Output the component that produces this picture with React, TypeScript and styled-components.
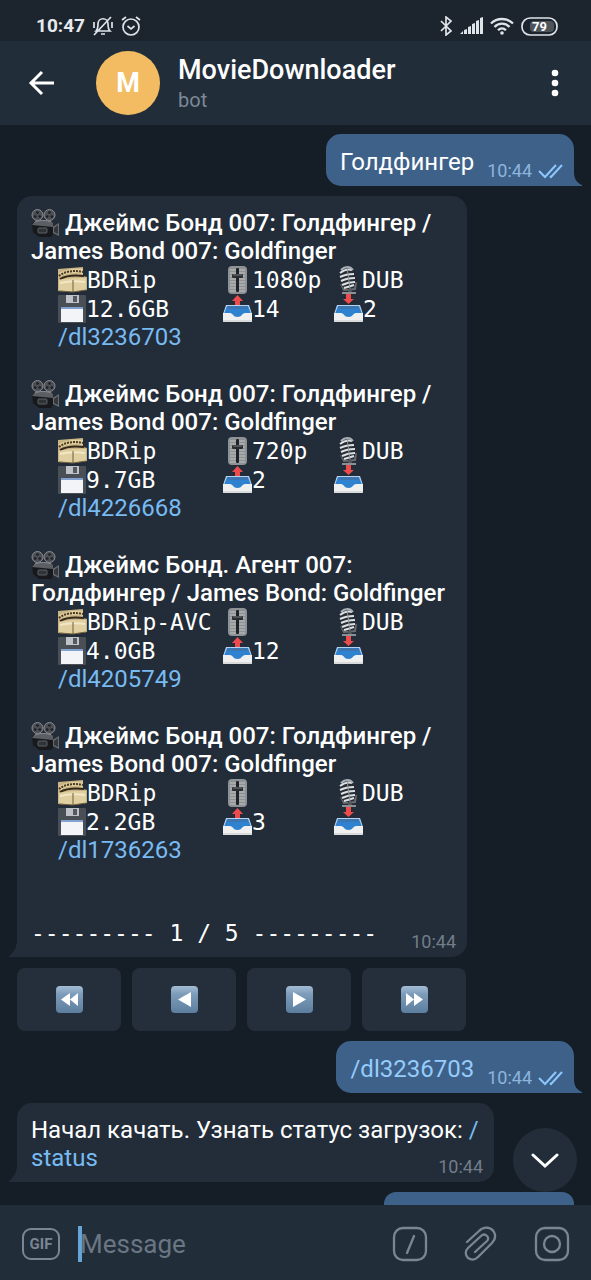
import React from "react";
import styled, { createGlobalStyle } from "styled-components";

const c = {
  page: "#151e27",
  status: "#1c242d",
  bar: "#222d3a",
  incoming: "#222d39",
  outgoing: "#3e618a",
  link: "#78bbf2",
  outLink: "#96ccfa",
  muted: "#727d8a",
  icon: "#7a8693",
};

const Global = createGlobalStyle`
  * { box-sizing: border-box; }
  body { margin: 0; background: ${c.page}; font-family: Roboto, "Open Sans", sans-serif; color: #fff; }
  button { border: 0; padding: 0; margin: 0; background: none; color: inherit; font: inherit; cursor: pointer; }
  svg { display: block; flex: none; }
  a { text-decoration: none; }
`;

const Screen = styled.div`
  display: flex;
  flex-direction: column;
  height: 100vh;
  overflow: hidden;
`;

const StatusBar = styled.div`
  display: flex;
  align-items: center;
  justify-content: space-between;
  flex: none;
  height: 41px;
  padding: 11px 33px 0 36px;
  background: ${c.status};
  color: #e6eaee;
`;

const StatusGroup = styled.div<{ $gap: number }>`
  display: flex;
  align-items: center;
  gap: ${(p) => p.$gap}px;
`;

const Clock = styled.span`
  font-size: 19px;
  line-height: 22px;
  font-weight: 700;
`;

const Header = styled.header`
  display: flex;
  align-items: center;
  flex: none;
  height: 84px;
  padding: 0 25px 0 26px;
  background: ${c.bar};
`;

const IconButton = styled.button`
  display: flex;
  align-items: center;
  justify-content: center;
  flex: none;
`;

const Avatar = styled.div`
  display: flex;
  align-items: center;
  justify-content: center;
  flex: none;
  width: 64px;
  height: 64px;
  margin: 0 18px 0 38px;
  border-radius: 50%;
  background: #f3bc62;
  font-size: 27px;
  font-weight: 700;
`;

const Peer = styled.div`
  flex: 1;
  min-width: 0;
  padding-top: 2px;
`;

const PeerName = styled.h1`
  margin: 0;
  font-size: 27px;
  line-height: 32px;
  font-weight: 500;
`;

const PeerKind = styled.p`
  margin: 0;
  font-size: 20px;
  line-height: 28px;
  color: #7c8896;
`;

const Chat = styled.main`
  position: relative;
  display: flex;
  flex-direction: column;
  flex: 1;
  min-height: 0;
  gap: 10px;
  padding: 9px 17px 0;
  overflow: hidden;
`;

const Bubble = styled.article<{ $out?: boolean; $width?: number }>`
  position: relative;
  display: flex;
  align-items: flex-end;
  gap: 13px;
  flex: none;
  align-self: ${(p) => (p.$out ? "flex-end" : "flex-start")};
  width: ${(p) => (p.$width ? `${p.$width}px` : "auto")};
  max-width: 100%;
  padding: ${(p) => (p.$out ? "14px 11px 10px 14px" : "13px 14px 10px")};
  border-radius: ${(p) => (p.$out ? "15px 15px 0 15px" : "15px 15px 15px 0")};
  background: ${(p) => (p.$out ? c.outgoing : c.incoming)};
  font-size: 24px;
  line-height: 28px;
`;

const BubbleBody = styled.div`
  flex: 1;
  min-width: 0;
`;

const TailShape = styled.svg<{ $out?: boolean }>`
  position: absolute;
  bottom: 0;
  ${(p) => (p.$out ? "left: 100%;" : "right: 100%;")}
`;

const Link = styled.a<{ $out?: boolean }>`
  color: ${(p) => (p.$out ? c.outLink : c.link)};
`;

const Stamp = styled.span<{ $out?: boolean }>`
  display: flex;
  align-items: center;
  gap: 6px;
  margin-bottom: ${(p) => (p.$out ? "-5px" : "0")};
  font-size: 18px;
  line-height: 20px;
  color: ${(p) => (p.$out ? "#8db5dc" : c.muted)};
`;

const CornerStamp = styled(Stamp)`
  position: absolute;
  right: 11px;
  bottom: 5px;
`;

const Movie = styled.section`
  margin-bottom: 29px;
`;

const MovieTitle = styled.h2`
  margin: 0;
  font-size: 24px;
  line-height: 28px;
  font-weight: 500;
  svg { display: inline-block; vertical-align: middle; margin: -6px 0 -2px; }
`;

const Facts = styled.div`
  display: grid;
  grid-template-columns: 165px 111px 1fr;
  grid-auto-rows: 29px;
  padding-left: 27px;
`;

const Fact = styled.span`
  display: flex;
  align-items: center;
  font-family: "Droid Sans Mono", "DejaVu Sans Mono", monospace;
  font-size: 23px;
  white-space: pre;
`;

const MovieLink = styled(Link)`
  display: block;
  padding-left: 27px;
`;

const Pager = styled.p`
  margin: 55px 0 0;
  font-family: "Droid Sans Mono", "DejaVu Sans Mono", monospace;
  font-size: 23px;
  line-height: 28px;
`;

const Keyboard = styled.div`
  display: grid;
  grid-template-columns: repeat(4, 1fr);
  gap: 11px;
  flex: none;
  width: 449px;
  max-width: 100%;
  height: 63px;
  margin-top: 1px;
`;

const Key = styled(IconButton)`
  border-radius: 8px;
  background: #242f3b;
`;

const ScrollDown = styled(IconButton)`
  position: absolute;
  right: 14px;
  bottom: 13px;
  width: 64px;
  height: 64px;
  border-radius: 50%;
  background: #232d3a;
`;

const Composer = styled.form`
  display: flex;
  align-items: center;
  flex: none;
  height: 75px;
  padding: 3px 21px 0 22px;
  background: ${c.bar};
  color: ${c.icon};
`;

const GifButton = styled(IconButton)`
  width: 38px;
  height: 32px;
  border: 2px solid ${c.icon};
  border-radius: 9px;
  font-size: 15px;
  font-weight: 700;
`;

const Field = styled.div`
  display: flex;
  align-items: center;
  flex: 1;
  min-width: 0;
  margin: 0 16px 0 18px;
`;

const Caret = styled.span`
  flex: none;
  width: 4px;
  height: 36px;
  margin-right: -2px;
  background: #64a5dc;
`;

const MessageInput = styled.input`
  flex: 1;
  min-width: 0;
  padding: 0;
  border: 0;
  outline: 0;
  background: transparent;
  color: #fff;
  font: 26px/36px Roboto, "Open Sans", sans-serif;
  &::placeholder { color: #6a7683; opacity: 1; }
`;

const Tools = styled.div`
  display: flex;
  align-items: center;
  gap: 35px;
`;

const Tail = ({ out }: { out?: boolean }) => (
  <TailShape $out={out} width="8" height="18" viewBox="0 0 8 18" aria-hidden>
    {out ? (
      <path d="M0 4C0 11 3 15 8 17V18H0Z" fill={c.outgoing} />
    ) : (
      <path d="M8 0C8 8 5 13 0 17V18H8Z" fill={c.incoming} />
    )}
  </TailShape>
);

const Checks = () => (
  <svg width="25" height="16" viewBox="0 0 25 16" fill="none" stroke="#8cc8fb" strokeWidth="2" aria-hidden>
    <path d="M1 8l6 6L18 2M12 13l1 1L24 2" />
  </svg>
);

const CameraIcon = () => (
  <svg width="28" height="28" viewBox="0 0 28 28" aria-hidden>
    <path d="M20 19l8-5v13l-8-4z" fill="#6a6c6f" />
    <path d="M23 19l4-3v9l-4-2z" fill="#34373b" />
    <path d="M1 15l4-4h14l3 3v11l-2 3H8l-6-5z" fill="#17191c" />
    <path d="M1 16l4-5h14l3 3v4c-7-1-14-1-21-2z" fill="#5b5f64" />
    <path d="M4 13c5-2 11-2 16 0" fill="none" stroke="#85898d" />
    <rect x="7" y="19" width="9" height="5" rx="1" fill="#303336" stroke="#5c6064" />
    <g fill="#4c4f53" stroke="#888b8f">
      <circle cx="6.500" cy="6" r="5.500" />
      <circle cx="18.500" cy="6" r="5.500" />
    </g>
    <g fill="#1c1f23">
      <circle cx="6.500" cy="3.500" r="1.300" /><circle cx="4.200" cy="7.500" r="1.300" /><circle cx="8.800" cy="7.500" r="1.300" />
      <circle cx="18.500" cy="3.500" r="1.300" /><circle cx="16.200" cy="7.500" r="1.300" /><circle cx="20.800" cy="7.500" r="1.300" />
    </g>
  </svg>
);

const FilmIcon = () => (
  <svg width="29" height="28" viewBox="0 0 29 28" aria-hidden>
    <path d="M0 3L25 1v9l4 1v13l-14 2L0 25z" fill="#c9b486" />
    <path d="M1 7c7-4 16-5 24-4v5C16 6 9 7 2 11z" fill="#e2cf9f" />
    <path d="M1 10C7 5 17 4 25 6" fill="none" stroke="#4b3b22" strokeWidth="2" strokeDasharray="2 1" />
    <path d="M2 13c7-4 16-4 24-3" fill="none" stroke="#33281a" strokeWidth="2" />
    <path d="M1 14c8-2 18-2 27-2v12l-13 2-14-2z" fill="#e0cfa1" />
    <path d="M2 17c8-2 17-2 25-1" fill="none" stroke="#f2e7c6" strokeWidth="2" />
    <path d="M15 14v12M1 25l14 1 13-2" fill="none" stroke="#715f3d" />
  </svg>
);

const FloppyIcon = () => (
  <svg width="28" height="28" viewBox="0 0 28 28" aria-hidden>
    <rect width="28" height="28" rx="1" fill="#4a4e55" />
    <rect x="8" width="13" height="8" fill="#bfc2c6" />
    <rect x="15" y="1" width="4" height="6" fill="#555a62" />
    <rect x="3" y="12" width="22" height="15" fill="#f2f4f7" />
    <rect x="3" y="12" width="22" height="2" fill="#82a3d1" />
  </svg>
);

const SliderIcon = () => (
  <svg width="29" height="28" viewBox="0 0 29 28" aria-hidden>
    <rect x="5" y="0" width="19" height="28" rx="4" fill="#8f9294" />
    <path d="M7 4h15M7 7h15M7 10h15M7 13h15M7 16h15M7 19h15M7 22h15M7 25h15" stroke="#bfc1c2" />
    <rect x="13" y="2" width="3" height="24" rx="1" fill="#1f2327" />
    <rect x="9" y="8" width="11" height="4" rx="1" fill="#292d31" />
    <path d="M10 9h9" stroke="#777b7f" />
  </svg>
);

const MicIcon = () => (
  <svg width="28" height="28" viewBox="0 0 28 28" aria-hidden>
    <path d="M7 18l3 6 11-1 1-7" fill="none" stroke="#696d71" strokeWidth="2" />
    <path d="M14 22h3l1 4h-4z" fill="#54585c" />
    <path d="M8 27h14" stroke="#8b9094" strokeWidth="2" />
    <rect x="6" y="1" width="15" height="22" rx="7" transform="rotate(-8 14 12)" fill="#272c31" />
    <path d="M6 7c4-3 9-4 12-3M6 11c4-2 9-3 14-3M7 15c4-2 9-3 14-3M8 19c4-2 8-3 13-3M10 22c4-1 7-2 10-3" fill="none" stroke="#dce0e5" strokeWidth="2" />
    <path d="M7 4c4-4 9-4 12 0" fill="none" stroke="#a9b0b6" strokeWidth="2" />
    <path d="M13 1l3 22" fill="none" stroke="#92999f" />
  </svg>
);

const TrayIcon = ({ up }: { up?: boolean }) => (
  <svg width="29" height="29" viewBox="0 0 29 29" aria-hidden>
    <path d="M3 11h23l3 9H0z" fill="#b5d3f0" />
    <path d="M4 12h21l3 8-6 2-3 3h-9l-3-3-6-2z" fill="#2f82d0" />
    <path d="M5 12h19l1 3H4z" fill="#3b76b0" />
    <path d="M0 19h7c3 0 3 4 7.500 4S19 19 22 19h7v8q0 1-1 1H1q-1 0-1-1z" fill="#f0f0f0" />
    <path d="M0 26h29v1q0 1-1 1H1q-1 0-1-1z" fill="#d9dadb" />
    <path d={up ? "M14.500 1L20 7h-3v4h-5V7H9z" : "M14.500 10L9 5h3V0h5v5h3z"} fill="#ee4c4c" />
  </svg>
);

const keyShapes: Record<string, string> = {
  First: "M14 7v13l-9-6.500zM22 7v13l-8-6.500z",
  Previous: "M20 6v15L7 13.500z",
  Next: "M7 6v15l13-7.500z",
  Last: "M5 7v13l8-6.500zM13 7v13l9-6.500z",
};

const KeyGlyph = ({ name }: { name: string }) => (
  <svg width="27" height="27" viewBox="0 0 27 27" aria-hidden>
    <defs>
      <linearGradient id={`key-${name}`} x2="0" y2="1">
        <stop stopColor="#a4bdd5" />
        <stop offset="0.300" stopColor="#7d9cba" />
        <stop offset="1" stopColor="#5c7e9e" />
      </linearGradient>
    </defs>
    <rect width="27" height="27" rx="4" fill={`url(#key-${name})`} />
    <path d={keyShapes[name]} fill="#fff" />
  </svg>
);

type MovieData = { title: string; rip: string; res: string; size: string; up: string; down: string; link: string };

const movies: MovieData[] = [
  { title: "Джеймс Бонд 007: Голдфингер / James Bond 007: Goldfinger", rip: "BDRip", res: "1080p", size: "12.6GB", up: "14", down: "2", link: "/dl3236703" },
  { title: "Джеймс Бонд 007: Голдфингер / James Bond 007: Goldfinger", rip: "BDRip", res: "720p", size: "9.7GB", up: "2", down: "", link: "/dl4226668" },
  { title: "Джеймс Бонд. Агент 007: Голдфингер / James Bond: Goldfinger", rip: "BDRip-AVC", res: "", size: "4.0GB", up: "12", down: "", link: "/dl4205749" },
  { title: "Джеймс Бонд 007: Голдфингер / James Bond 007: Goldfinger", rip: "BDRip", res: "", size: "2.2GB", up: "3", down: "", link: "/dl1736263" },
];

export default function App() {
  return (
    <Screen>
      <Global />
      <StatusBar>
        <StatusGroup $gap={8}>
          <Clock>10:47</Clock>
          <svg width="20" height="20" viewBox="0 0 20 20" fill="none" stroke="#dfe4e9" strokeWidth="1.700" aria-hidden>
            <path d="M3 15c2-2 2-4 2-7 0-7 10-7 10 0 0 3 0 5 2 7zM8 18h4M18 1L1 19M1 6v6M19 6v6" />
          </svg>
          <svg width="20" height="20" viewBox="0 0 20 20" fill="none" stroke="#dfe4e9" strokeWidth="1.700" aria-hidden>
            <circle cx="10" cy="11" r="8" />
            <path d="M1 4l4-3M19 4l-4-3M6.500 10l3.500 3 3.500-3" />
          </svg>
        </StatusGroup>
        <StatusGroup $gap={7}>
          <svg width="13" height="20" viewBox="0 0 13 20" fill="none" stroke="#dfe4e9" strokeWidth="1.700" aria-hidden>
            <path d="M1 5l10 10-5 4V1l5 4L1 15" />
          </svg>
          <svg width="23" height="18" viewBox="0 0 23 18" fill="#dfe4e9" aria-hidden>
            <path d="M0 17l3-3v3zM4 13l3-1v5H4zM8 10l3-1v8H8zM12 7l3-1v11h-3zM16 4l3-1v14h-3zM20 1l3-1v17h-3z" />
          </svg>
          <svg width="24" height="18" viewBox="0 0 24 18" fill="none" stroke="#dfe4e9" strokeWidth="2.300" aria-hidden>
            <path d="M1 6.500c6-6 16-6 22 0M4.500 10c4-4.500 11-4.500 15 0M8 13.300c2.500-2.600 5.500-2.600 8 0" />
            <circle cx="12" cy="16" r="1.800" fill="#dfe4e9" stroke="none" />
          </svg>
          <svg width="37" height="19" viewBox="0 0 37 19" aria-hidden>
            <rect x="1" y="1" width="35" height="17" rx="8" fill="none" stroke="#dfe4e9" strokeWidth="1.700" />
            <rect x="9" y="4" width="24" height="11" rx="4" fill="#4d545c" />
            <text x="18.500" y="14" textAnchor="middle" fontFamily="Roboto, sans-serif" fontSize="13" fontWeight="700" fill="#fff">79</text>
          </svg>
        </StatusGroup>
      </StatusBar>

      <Header>
        <IconButton aria-label="Back">
          <svg width="32" height="28" viewBox="0 0 32 28" fill="none" stroke="#fff" strokeWidth="3" aria-hidden>
            <path d="M28 14H6M16 3L5 14l11 11" />
          </svg>
        </IconButton>
        <Avatar>M</Avatar>
        <Peer>
          <PeerName>MovieDownloader</PeerName>
          <PeerKind>bot</PeerKind>
        </Peer>
        <IconButton aria-label="More options">
          <svg width="21" height="28" viewBox="0 0 21 28" fill="#fff" aria-hidden>
            <circle cx="10" cy="4" r="3.300" /><circle cx="10" cy="14" r="3.300" /><circle cx="10" cy="24" r="3.300" />
          </svg>
        </IconButton>
      </Header>

      <Chat>
        <Bubble $out>
          <BubbleBody>Голдфингер</BubbleBody>
          <Stamp $out>10:44 <Checks /></Stamp>
          <Tail out />
        </Bubble>

        <Bubble $width={450}>
          <BubbleBody>
            {movies.map((m) => (
              <Movie key={m.link}>
                <MovieTitle><CameraIcon /> {m.title}</MovieTitle>
                <Facts>
                  <Fact><FilmIcon />{m.rip}</Fact>
                  <Fact><SliderIcon />{m.res}</Fact>
                  <Fact><MicIcon />{"DUB"}</Fact>
                  <Fact><FloppyIcon />{m.size}</Fact>
                  <Fact><TrayIcon up />{m.up}</Fact>
                  <Fact><TrayIcon />{m.down}</Fact>
                </Facts>
                <MovieLink href="#">{m.link}</MovieLink>
              </Movie>
            ))}
            <Pager>--------- 1 / 5 ---------</Pager>
          </BubbleBody>
          <CornerStamp>10:44</CornerStamp>
          <Tail />
        </Bubble>

        <Keyboard>
          {Object.keys(keyShapes).map((name) => (
            <Key key={name} aria-label={name}><KeyGlyph name={name} /></Key>
          ))}
        </Keyboard>

        <Bubble $out>
          <BubbleBody><Link $out href="#">/dl3236703</Link></BubbleBody>
          <Stamp $out>10:44 <Checks /></Stamp>
          <Tail out />
        </Bubble>

        <Bubble $width={477}>
          <BubbleBody>
            Начал качать. Узнать статус загрузок: <Link href="#">/<wbr />status</Link>
          </BubbleBody>
          <CornerStamp>10:44</CornerStamp>
          <Tail />
        </Bubble>

        <Bubble $out $width={190} />

        <ScrollDown aria-label="Scroll to bottom">
          <svg width="28" height="18" viewBox="0 0 28 18" fill="none" stroke="#fff" strokeWidth="3" strokeLinecap="round" aria-hidden>
            <path d="M2 4l12 11L26 4" />
          </svg>
        </ScrollDown>
      </Chat>

      <Composer>
        <GifButton type="button">GIF</GifButton>
        <Field>
          <Caret />
          <MessageInput aria-label="Message" placeholder="Message" />
        </Field>
        <Tools>
          <IconButton type="button" aria-label="Commands">
            <svg width="36" height="36" viewBox="0 0 36 36" fill="none" stroke={c.icon} strokeWidth="2.300" strokeLinecap="round" aria-hidden>
              <rect x="2" y="2" width="32" height="32" rx="9" />
              <path d="M22 10l-7 17" />
            </svg>
          </IconButton>
          <IconButton type="button" aria-label="Attach">
            <svg width="36" height="36" viewBox="0 0 36 36" fill="none" stroke={c.icon} strokeWidth="2.300" strokeLinecap="round" aria-hidden>
              <path d="M4 16L16 5C21 0 28 1 31 6c2 4 1 8-2 11L15 31c-3 3-7 3-10 1-3-3-3-7 0-10L18 10c2-2 4-2 6 0s1 4 0 5L12 26" />
            </svg>
          </IconButton>
          <IconButton type="button" aria-label="Camera">
            <svg width="36" height="36" viewBox="0 0 36 36" fill="none" stroke={c.icon} strokeWidth="2.300" aria-hidden>
              <rect x="2" y="2" width="32" height="32" rx="9" />
              <circle cx="18" cy="18" r="8" />
            </svg>
          </IconButton>
        </Tools>
      </Composer>
    </Screen>
  );
}
